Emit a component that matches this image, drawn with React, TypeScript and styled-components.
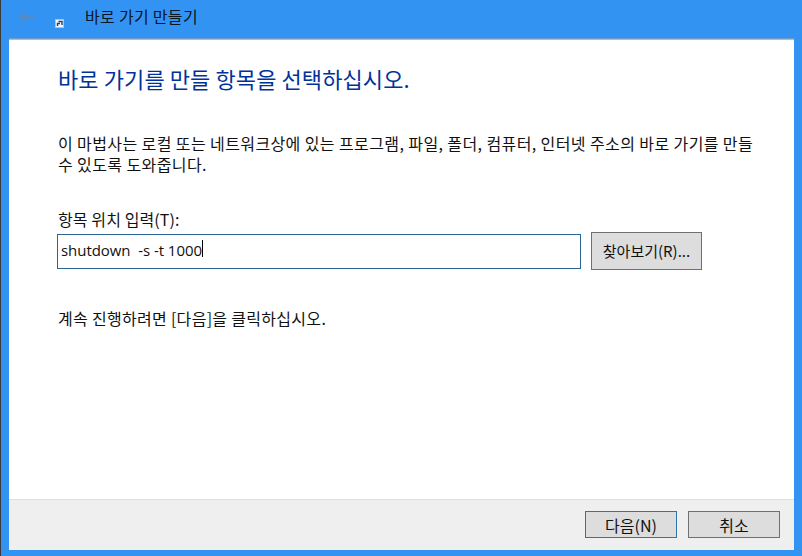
import { FC } from 'react';
import styled, { createGlobalStyle } from 'styled-components';

const GlobalStyle = createGlobalStyle`
    html, body {
        margin: 0;
        padding: 0;
        background: #3393f3;
    }
    * {
        box-sizing: border-box;
    }
`;

const Window = styled.div`
    width: 802px;
    height: 556px;
    display: flex;
    flex-direction: column;
    background: #3393f3;
    border-left: 1px solid #3a3a3a;
    font-family: "Noto Sans CJK KR", "Noto Sans", sans-serif;
    font-size: 16px;
    letter-spacing: 0.3px;
    color: #111;
    overflow: hidden;
`;

const TitleBar = styled.div`
    height: 40px;
    flex: none;
    display: flex;
    align-items: flex-start;
    padding-left: 18px;
`;

const BackIcon = styled.svg`
    width: 16px;
    height: 13px;
    margin-top: 10px;
    flex: none;
`;

const ShortcutIcon = styled.svg`
    width: 9px;
    height: 9px;
    margin: 19px 0 0 20px;
    flex: none;
`;

const WindowTitle = styled.div`
    margin: 5px 0 0 21px;
    font-size: 16px;
    line-height: 22px;
    color: #0a1526;
`;

const Sheet = styled.div`
    flex: 1;
    margin: 0 8px 6px 8px;
    display: flex;
    flex-direction: column;
    background: #fff;
    box-shadow: 0 -1px 0 #a3c0de, 0 -2px 0 #6f9bc9;
`;

const Content = styled.div`
    flex: 1;
    padding: 24px 30px 0 48px;
`;

const Heading = styled.h1`
    margin: 0 0 0 1px;
    font-size: 22px;
    font-weight: 400;
    letter-spacing: 0.1px;
    line-height: 28px;
    color: #003399;
`;

const Intro = styled.p`
    margin: 41px 0 0 1px;
    line-height: 21px;
    letter-spacing: 0.4px;
    width: 700px;
`;

const FieldLabel = styled.label`
    display: block;
    margin: 34px 0 0 1px;
    line-height: 20px;
    letter-spacing: 0.1px;
`;

const FieldRow = styled.div`
    display: flex;
    gap: 10px;
    margin-top: 5px;
`;

const TextInput = styled.div`
    width: 524px;
    height: 35px;
    padding: 4px 3px;
    border: 1px solid #2b6593;
    line-height: 22px;
    font-family: "Open Sans", "Noto Sans", sans-serif;
    font-size: 15px;
    letter-spacing: -0.05px;
    white-space: pre;
    display: flex;
    align-items: flex-start;
`;

const Caret = styled.span`
    width: 1px;
    height: 17px;
    margin-top: 1px;
    background: #000;
`;

const Button = styled.button<{ $primary?: boolean }>`
    height: 38px;
    width: 111px;
    margin: -2px 0 -1px;
    padding: 0 0 2px;
    background: #dddddd;
    border: 1px solid ${p => (p.$primary ? '#2f74ab' : '#707070')};
    font-family: inherit;
    font-size: 15px;
    letter-spacing: 0;
    color: #111;
`;

const FooterButton = styled(Button)`
    width: 92px;
    height: 27px;
    margin: 0;
    padding: 0;
    font-size: 16px;
    line-height: 20px;
`;

const Hint = styled.p`
    margin: 39px 0 0 1px;
    line-height: 20px;
`;

const Footer = styled.div`
    height: 51px;
    flex: none;
    display: flex;
    justify-content: flex-end;
    align-items: flex-start;
    gap: 11px;
    padding: 11px 14px 0 0;
    background: #efefef;
    border-top: 1px solid #dfdfdf;
`;

const App: FC = () => {
    return (
        <Window>
            <GlobalStyle />
            <TitleBar>
                <BackIcon viewBox="0 0 16 13">
                    <path d="M15 6.5H1.5M7 1L1.5 6.5 7 12" fill="none" stroke="#5f87b3" strokeWidth="1.6" />
                </BackIcon>
                <ShortcutIcon viewBox="0 0 9 9">
                    <rect width="9" height="9" fill="#f4f6f8" />
                    <rect x="0.5" y="0.5" width="8" height="8" fill="none" stroke="#b9c0c8" />
                    <path d="M2.5 7V4.5h2.5M3.5 2.5H7V6" fill="none" stroke="#17477f" strokeWidth="1.4" />
                </ShortcutIcon>
                <WindowTitle>바로 가기 만들기</WindowTitle>
            </TitleBar>
            <Sheet>
                <Content>
                    <Heading>바로 가기를 만들 항목을 선택하십시오.</Heading>
                    <Intro>이 마법사는 로컬 또는 네트워크상에 있는 프로그램, 파일, 폴더, 컴퓨터, 인터넷 주소의 바로 가기를 만들 수 있도록 도와줍니다.</Intro>
                    <FieldLabel>항목 위치 입력(T):</FieldLabel>
                    <FieldRow>
                        <TextInput>shutdown  -s -t 1000<Caret /></TextInput>
                        <Button>찾아보기(R)...</Button>
                    </FieldRow>
                    <Hint>계속 진행하려면 [다음]을 클릭하십시오.</Hint>
                </Content>
                <Footer>
                    <FooterButton $primary>다음(N)</FooterButton>
                    <FooterButton>취소</FooterButton>
                </Footer>
            </Sheet>
        </Window>
    );
};

export default App;
